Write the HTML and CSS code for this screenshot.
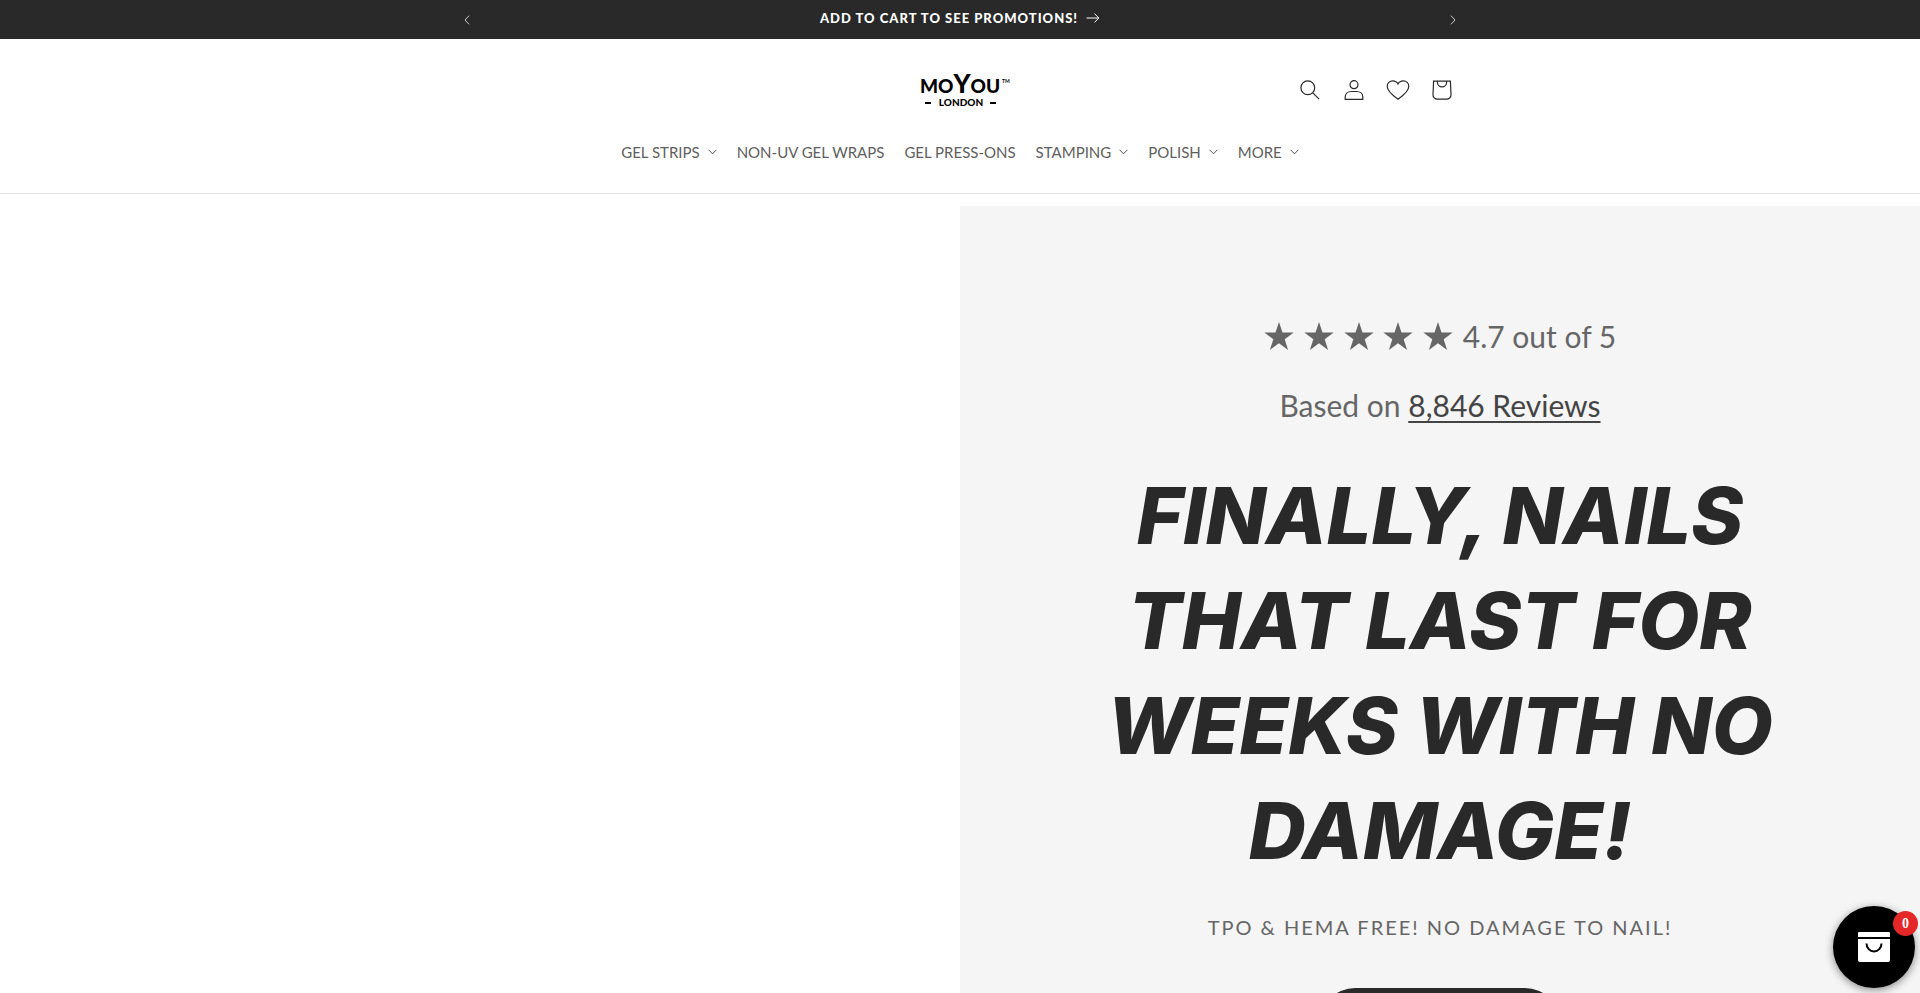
FILE: index.html
```
<!DOCTYPE html>
<html lang="en">
<head>
<meta charset="utf-8">
<meta name="viewport" content="width=device-width, initial-scale=1">
<title>MoYou London</title>
<link rel="stylesheet" href="styles.css">
</head>
<body class="page">
<div class="announcement">
  <div class="announcement-inner">
    <button class="arrow-button" type="button" aria-label="Previous announcement"><svg width="6" height="10" viewBox="0 0 6 10"><path d="M5 .7 1 5l4 4.300"/></svg></button>
    <a class="announcement-link" href="#"><span>ADD TO CART TO SEE PROMOTIONS!</span><svg width="14" height="10" viewBox="0 0 14 10"><path d="M.5 5h12M8.500.7 12.900 5 8.500 9.300"/></svg></a>
    <button class="arrow-button" type="button" aria-label="Next announcement"><svg width="6" height="10" viewBox="0 0 6 10"><path d="M1 .7 5 5 1 9.300"/></svg></button>
  </div>
</div>
<header class="header">
  <div class="header-top">
    <a class="logo" href="#" aria-label="MoYou London">
      <svg width="80" height="34" viewBox="0 0 80 34">
        <text class="logo-main" x="0" y="20">MO<tspan class="logo-y">Y</tspan>OU</text>
        <text class="logo-tm" x="82" y="10">TM</text>
        <text class="logo-sub" x="41" y="33" text-anchor="middle">LONDON</text>
        <path class="logo-dash" d="M5 30h6M70 30h6"/>
      </svg>
    </a>
    <div class="header-icons">
      <button class="icon-button" type="button" aria-label="Search"><svg width="20" height="20" viewBox="0 0 20 20"><circle cx="7.800" cy="7.800" r="6.900"/><path d="m12.800 12.800 6.300 6.300"/></svg></button>
      <a class="icon-button" href="#" aria-label="Log in"><svg width="20" height="20" viewBox="0 0 20 20"><circle cx="10" cy="4.700" r="4"/><path d="M1.200 19.300V17c0-3.400 2.800-5.500 6.300-5.500h5c3.500 0 6.300 2.100 6.300 5.500v2.300z"/></svg></a>
      <a class="icon-button" href="#" aria-label="Wishlist"><svg width="24" height="20" viewBox="0 0 24 20"><path d="M12 19.200C5.500 14.700 1.200 11 1.200 6.300 1.200 3.200 3.600.8 6.700.8 8.900.8 11 2 12 4 13 2 15.100.8 17.300.8c3.100 0 5.500 2.400 5.500 5.500 0 4.700-4.300 8.400-10.800 12.900z"/></svg></a>
      <a class="icon-button" href="#" aria-label="Cart"><svg width="20" height="20" viewBox="0 0 20 20"><path d="M1.600 1.200h16.800l.6 13.300c.1 2.700-1.800 4.700-4.500 4.700h-9c-2.700 0-4.600-2-4.500-4.700zM5.400 1.200v1a4.600 4.600 0 0 0 9.200 0v-1"/></svg></a>
    </div>
  </div>
  <nav class="nav" aria-label="Main">
    <button class="nav-item" type="button">GEL STRIPS<svg class="caret" width="9" height="6" viewBox="0 0 9 6"><path d="m.6.8 3.900 4 3.900-4"/></svg></button>
    <a class="nav-item" href="#">NON-UV GEL WRAPS</a>
    <a class="nav-item" href="#">GEL PRESS-ONS</a>
    <button class="nav-item" type="button">STAMPING<svg class="caret" width="9" height="6" viewBox="0 0 9 6"><path d="m.6.8 3.900 4 3.900-4"/></svg></button>
    <button class="nav-item" type="button">POLISH<svg class="caret" width="9" height="6" viewBox="0 0 9 6"><path d="m.6.8 3.900 4 3.900-4"/></svg></button>
    <button class="nav-item" type="button">MORE<svg class="caret" width="9" height="6" viewBox="0 0 9 6"><path d="m.6.8 3.900 4 3.900-4"/></svg></button>
  </nav>
</header>
<main class="hero">
  <div class="hero-media"></div>
  <section class="hero-content">
    <p class="rating"><svg class="stars" width="190" height="31" viewBox="0 0 190 31" role="img" aria-label="5 stars"><defs><path id="star" d="m15 1 3.500 10.600h11.200l-9 6.600 3.400 10.700L15 22.300l-9.100 6.600 3.400-10.700-9-6.600h11.200z"/></defs><use href="#star"/><use href="#star" x="40"/><use href="#star" x="80"/><use href="#star" x="119"/><use href="#star" x="159"/></svg><span>4.7 out of 5</span></p>
    <p class="reviews">Based on <a class="reviews-link" href="#">8,846 Reviews</a></p>
    <h1 class="title">FINALLY, NAILS<br>THAT LAST FOR<br>WEEKS WITH NO<br>DAMAGE!</h1>
    <p class="subtitle">TPO &amp; HEMA FREE! NO DAMAGE TO NAIL!</p>
    <a class="cta" href="#" aria-label="Shop"></a>
  </section>
</main>
<button class="cart-bubble" type="button" aria-label="Open cart">
  <svg width="32" height="30" viewBox="0 0 32 30"><path fill="#fff" d="M1 0h30q1 0 1 1v4H0V1q0-1 1-1zM0 7h32v21q0 2-2 2H2q-2 0-2-2z"/><path fill="none" stroke="#000" stroke-width="2" d="M8.500 11.500a7.500 8 0 0 0 15 0"/></svg>
  <span class="cart-count">0</span>
</button>
</body>
</html>
```
FILE: styles.css
```
* { box-sizing: border-box; }
.page {
  display: flex;
  flex-direction: column;
  height: 100vh;
  margin: 0;
  overflow: hidden;
  background: #fff;
  color: #292929;
  font-family: Lato, sans-serif;
}
button {
  padding: 0;
  border: 0;
  background: none;
  color: inherit;
  font: inherit;
  cursor: pointer;
}
a { color: inherit; text-decoration: none; }
p, h1 { margin: 0; }
svg { display: block; flex: none; overflow: visible; }

.announcement { flex: none; background: #292929; color: #fff; }
.announcement-inner {
  display: flex;
  align-items: center;
  justify-content: space-between;
  width: 100%;
  max-width: 1030px;
  height: 39px;
  margin: 0 auto;
}
.arrow-button {
  display: grid;
  place-items: center;
  width: 44px;
  height: 39px;
}
.arrow-button path,
.announcement-link path { fill: none; stroke: #fff; }
.arrow-button path { stroke: #ccc; }
.announcement-link {
  display: flex;
  align-items: center;
  gap: 8px;
  padding-bottom: 3px;
  font-size: 13px;
  font-weight: 900;
  letter-spacing: 1px;
}

.header {
  flex: none;
  height: 155px;
  padding-top: 29px;
  border-bottom: 1px solid #e8e8e8;
}
.header-top {
  display: grid;
  grid-template-columns: 1fr auto 1fr;
  align-items: center;
  width: 100%;
  max-width: 1008px;
  height: 44px;
  margin: 0 auto;
}
.logo { grid-column: 2; }
.logo text { fill: #000; font-weight: 900; }
.logo-main { font-size: 19px; }
.logo-y { font-size: 26px; }
.logo .logo-tm { font-size: 5px; font-weight: 700; }
.logo-sub { font-size: 10px; }
.logo-dash { stroke: #000; stroke-width: 2; }
.header-icons { display: flex; justify-content: flex-end; }
.icon-button {
  display: grid;
  place-items: center;
  width: 44px;
  height: 44px;
}
.icon-button path,
.icon-button circle { fill: none; stroke: #292929; stroke-width: 1.2; }
.nav {
  display: flex;
  justify-content: center;
  margin-top: 18px;
}
.nav-item {
  display: flex;
  align-items: center;
  gap: 8px;
  padding: 12px 10px;
  color: #606060;
  font-size: 15px;
  line-height: 20px;
}
.caret path { fill: none; stroke: #555; }

.hero {
  display: grid;
  grid-template-columns: 1fr 1fr;
  flex: 1;
  min-height: 0;
  padding-top: 12px;
}
.hero-content {
  display: flex;
  flex-direction: column;
  align-items: center;
  padding-top: 103px;
  background: #f5f5f5;
  color: #666;
  text-align: center;
  overflow: hidden;
}
.rating,
.reviews { font-size: 30px; line-height: 54px; }
.rating { display: flex; align-items: center; gap: 9px; }
.stars { fill: #666; }
.reviews { margin-top: 15px; }
.reviews-link {
  color: #444;
  text-decoration: underline;
  text-decoration-thickness: 2px;
  text-underline-offset: 4px;
}
.title {
  margin-top: 31px;
  color: #292929;
  font-family: Inter, sans-serif;
  font-size: 79px;
  font-style: italic;
  font-weight: 800;
  line-height: 105px;
}
.subtitle {
  margin-top: 26px;
  font-size: 20px;
  line-height: 36px;
  letter-spacing: 2px;
}
.cta {
  flex: none;
  width: 240px;
  height: 70px;
  margin-top: 43px;
  border-radius: 35px;
  background: #292929;
}

.cart-bubble {
  position: fixed;
  right: 5px;
  bottom: 5px;
  display: grid;
  place-items: center;
  width: 82px;
  height: 82px;
  border-radius: 50%;
  background: #000;
  box-shadow: 0 2px 8px rgba(0, 0, 0, .45);
}
.cart-count {
  position: absolute;
  top: 5px;
  right: -3px;
  width: 25px;
  height: 25px;
  border-radius: 50%;
  background: #e52727;
  color: #fff;
  font: 700 14px/25px "Liberation Serif", serif;
}
```
